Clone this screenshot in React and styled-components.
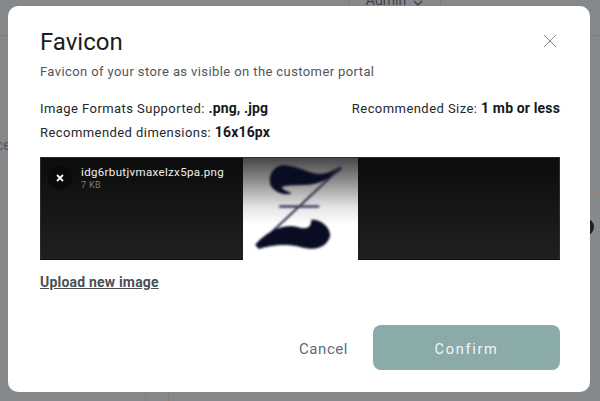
import React from "react";
import styled, { createGlobalStyle } from "styled-components";

const Global = createGlobalStyle`
  html, body { margin: 0; padding: 0; background: #85898c; }
  * { box-sizing: border-box; }
`;

const Page = styled.div`
  position: relative;
  width: 600px;
  height: 401px;
  overflow: hidden;
  background: #85898c;
  font-family: Roboto, "Liberation Sans", sans-serif;
`;

const AdminPill = styled.div`
  position: absolute;
  left: 348px;
  top: -20px;
  width: 93px;
  height: 40px;
  border: 1px solid #777b7e;
  border-radius: 8px;
  display: flex;
  align-items: flex-end;
  justify-content: center;
  gap: 7px;
  padding-bottom: 11px;
  font-size: 14px;
  color: #3f4347;
`;

const Rule = styled.div`
  position: absolute;
  left: 0;
  width: 600px;
  height: 1px;
  top: ${(p) => p.$top}px;
  background: ${(p) => p.$color};
`;

const VRule = styled.div`
  position: absolute;
  top: 392px;
  width: 1px;
  height: 9px;
  left: ${(p) => p.$left}px;
  background: #8f7a72;
`;

const EdgeText = styled.span`
  position: absolute;
  left: -4px;
  top: 137px;
  font-size: 14px;
  color: #55595c;
`;

const EdgeDot = styled.div`
  position: absolute;
  left: 576px;
  top: 218px;
  width: 18px;
  height: 18px;
  border-radius: 50%;
  background: #1c1f24;
`;

const Modal = styled.div`
  position: absolute;
  left: 8px;
  top: 6px;
  width: 582px;
  height: 386px;
  background: #fff;
  border-radius: 10px;
  padding: 21px 30px 22px 32px;
  display: flex;
  flex-direction: column;
`;

const Header = styled.div`
  display: flex;
  justify-content: space-between;
  align-items: flex-start;
`;

const Title = styled.h1`
  margin: 0;
  font-size: 24px;
  line-height: 30px;
  font-weight: 400;
  letter-spacing: 0;
  color: #1a1d21;
`;

const CloseButton = styled.button`
  border: 0;
  background: none;
  padding: 0;
  margin: 7px 3px 0 0;
  width: 14px;
  height: 14px;
  display: flex;
  color: #7f8c9a;
`;

const Subtitle = styled.p`
  margin: 5px 0 0;
  font-size: 13px;
  line-height: 20px;
  letter-spacing: 0.4px;
  color: #50555a;
`;

const InfoRow = styled.div`
  display: flex;
  justify-content: space-between;
  height: 24px;
  font-size: 13px;
  line-height: 24px;
  letter-spacing: 0.44px;
  color: #24272b;
  margin-top: ${(p) => p.$mt || 0}px;
  b { font-size: 14px; line-height: 1; font-weight: 700; color: #17191c; letter-spacing: 0.15px; }
`;

const Dropzone = styled.div`
  margin-top: 12px;
  height: 103px;
  display: flex;
  background: linear-gradient(#0c0c0c, #202020);
  border: 1px solid #2c2c2c;
  border-bottom-color: #111;
`;

const FilePanel = styled.div`
  width: 202px;
  padding: 8px 7px;
  display: flex;
  align-items: flex-start;
  gap: 9px;
`;

const RemoveBadge = styled.div`
  width: 24px;
  height: 24px;
  border-radius: 50%;
  background: #0a0a0a;
  display: flex;
  align-items: center;
  justify-content: center;
  color: #fff;
`;

const FileMeta = styled.div`
  display: flex;
  flex-direction: column;
  font-size: 11.5px;
  line-height: 13px;
  letter-spacing: 0.35px;
  color: #f1f1f1;
`;

const FileSize = styled.span`
  font-size: 9px;
  line-height: 12px;
  color: #7d7d7d;
`;

const Preview = styled.div`
  width: 115px;
  height: 102px;
  flex: none;
  background: linear-gradient(#474747 0%, #8c8c8c 22%, #e4e4e4 48%, #ffffff 65%);
  svg { display: block; width: 100%; height: 100%; filter: blur(0.8px); }
`;

const UploadLink = styled.a`
  margin-top: 14px;
  font-size: 14px;
  line-height: 16px;
  font-weight: 700;
  letter-spacing: 0.2px;
  color: #4a4f55;
  text-decoration: underline;
  align-self: flex-start;
`;

const Footer = styled.div`
  margin-top: auto;
  display: flex;
  justify-content: flex-end;
  align-items: center;
  gap: 25px;
`;

const CancelButton = styled.button`
  border: 0;
  background: none;
  padding: 2px 0 0;
  font: 400 15px Roboto, sans-serif;
  letter-spacing: 0.55px;
  color: #5d6b7b;
`;

const ConfirmButton = styled.button`
  width: 187px;
  height: 45px;
  border: 0;
  border-radius: 8px;
  padding: 3px 0 0;
  background: #8aabaa;
  color: #f2f7f6;
  font: 400 14.5px Roboto, sans-serif;
  letter-spacing: 1.7px;
`;

const ZMark = () => (
  <svg viewBox="9 6 345 309" aria-hidden="true">
    <path
      d="M300 33C280 48 250 62 215 52C180 40 150 26 122 30C98 36 84 60 92 88C102 108 130 118 152 113C136 106 122 100 124 94C130 86 160 88 200 86C240 84 278 62 305 40Z"
      fill="#0a0c24"
      stroke="#0a0c24"
      strokeWidth="3"
    />
    <path d="M302 36L50 272" stroke="#2c2e4c" strokeWidth="6" strokeLinecap="round" />
    <path d="M117 153H238" stroke="#3a3c58" strokeWidth="7" />
    <path
      d="M46 268C78 232 128 206 170 216C196 224 214 222 216 194C242 194 270 214 270 242C262 274 228 286 188 276C150 264 100 266 55 280Z"
      fill="#0a0c24"
      stroke="#0a0c24"
      strokeWidth="3"
    />
  </svg>
);

export default function App() {
  return (
    <Page>
      <Global />
      <AdminPill>
        Admin
        <svg width="10" height="10" viewBox="0 0 10 10" fill="none" stroke="currentColor" strokeWidth="1.4">
          <path d="M1 3l4 4 4-4" />
        </svg>
      </AdminPill>
      <Rule $top={35} $color="#7b7f82" />
      <Rule $top={192} $color="#94807a" />
      <Rule $top={381} $color="#8f8480" />
      <VRule $left={145} />
      <VRule $left={168} />
      <EdgeText>ce</EdgeText>
      <EdgeDot />
      <Modal>
        <Header>
          <Title>Favicon</Title>
          <CloseButton aria-label="Close">
            <svg width="14" height="14" viewBox="0 0 14 14" fill="none" stroke="currentColor" strokeWidth="1">
              <path d="M1 1l12 12M13 1L1 13" />
            </svg>
          </CloseButton>
        </Header>
        <Subtitle>Favicon of your store as visible on the customer portal</Subtitle>
        <InfoRow $mt={15}>
          <span>Image Formats Supported: <b>.png, .jpg</b></span>
          <span>Recommended Size: <b>1 mb or less</b></span>
        </InfoRow>
        <InfoRow>
          <span>Recommended dimensions: <b>16x16px</b></span>
        </InfoRow>
        <Dropzone>
          <FilePanel>
            <RemoveBadge>
              <svg width="8" height="8" viewBox="0 0 8 8" fill="none" stroke="currentColor" strokeWidth="1.8">
                <path d="M1 1l6 6M7 1L1 7" />
              </svg>
            </RemoveBadge>
            <FileMeta>
              idg6rbutjvmaxelzx5pa.png
              <FileSize>7 KB</FileSize>
            </FileMeta>
          </FilePanel>
          <Preview>
            <ZMark />
          </Preview>
        </Dropzone>
        <UploadLink>Upload new image</UploadLink>
        <Footer>
          <CancelButton>Cancel</CancelButton>
          <ConfirmButton>Confirm</ConfirmButton>
        </Footer>
      </Modal>
    </Page>
  );
}
